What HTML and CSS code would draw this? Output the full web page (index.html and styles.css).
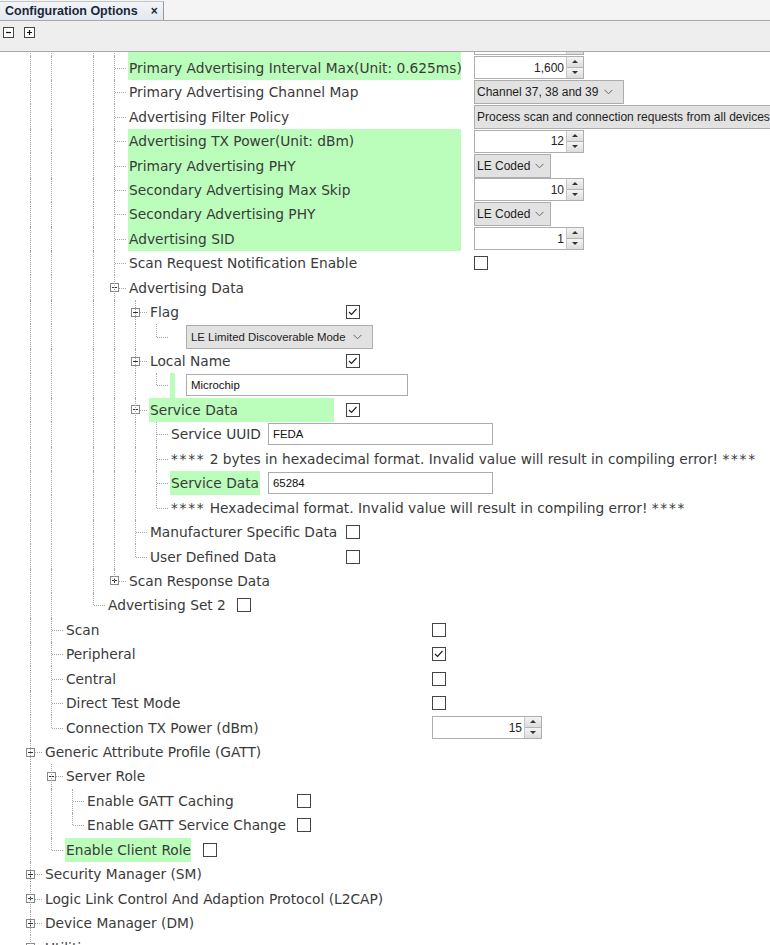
FILE: index.html
```html
<!DOCTYPE html>
<html>
<head>
<meta charset="utf-8">
<link rel="stylesheet" href="styles.css">
</head>
<body>
<div class="window">
  <div class="tabbar">
    <div class="tab"><span class="tab-title">Configuration Options</span><span class="tab-close">×</span></div>
  </div>
  <div class="toolbar">
    <span class="tbtn"><svg width="11" height="11" viewBox="0 0 11 11"><rect x="0.5" y="0.5" width="10" height="10" fill="#fff" stroke="#444"/><path d="M3 5.5h5" stroke="#111" stroke-width="1.2"/></svg></span>
    <span class="tbtn"><svg width="11" height="11" viewBox="0 0 11 11"><rect x="0.5" y="0.5" width="10" height="10" fill="#fff" stroke="#444"/><path d="M3 5.5h5M5.5 3v5" stroke="#111" stroke-width="1.2"/></svg></span>
  </div>
  <div class="viewport">
    <div class="tree">
      <div class="row">
        <span class="g v"></span><span class="g v"></span><span class="g"></span><span class="g v"></span><span class="g t"></span>
        <span class="lbl w5 hl"></span>
        <span class="spin"><span class="num"></span><span class="btns"><span class="up"></span><span class="dn"></span></span></span>
      </div>
      <div class="row">
        <span class="g v"></span><span class="g v"></span><span class="g"></span><span class="g v"></span><span class="g t"></span>
        <span class="lbl w5 hl">Primary Advertising Interval Max(Unit: 0.625ms)</span>
        <span class="spin"><span class="num">1,600</span><span class="btns"><span class="up"></span><span class="dn"></span></span></span>
      </div>
      <div class="row">
        <span class="g v"></span><span class="g v"></span><span class="g"></span><span class="g v"></span><span class="g t"></span>
        <span class="lbl w5">Primary Advertising Channel Map</span>
        <span class="combo">Channel 37, 38 and 39<svg class="chev" width="9" height="6" viewBox="0 0 9 6"><path d="M0.5 0.8l4 4 4-4" fill="none" stroke="#666"/></svg></span>
      </div>
      <div class="row">
        <span class="g v"></span><span class="g v"></span><span class="g"></span><span class="g v"></span><span class="g t"></span>
        <span class="lbl w5">Advertising Filter Policy</span>
        <span class="combo wide">Process scan and connection requests from all devices<svg class="chev" width="9" height="6" viewBox="0 0 9 6"><path d="M0.5 0.8l4 4 4-4" fill="none" stroke="#666"/></svg></span>
      </div>
      <div class="row">
        <span class="g v"></span><span class="g v"></span><span class="g"></span><span class="g v"></span><span class="g t"></span>
        <span class="lbl w5 hl">Advertising TX Power(Unit: dBm)</span>
        <span class="spin"><span class="num">12</span><span class="btns"><span class="up"></span><span class="dn"></span></span></span>
      </div>
      <div class="row">
        <span class="g v"></span><span class="g v"></span><span class="g"></span><span class="g v"></span><span class="g t"></span>
        <span class="lbl w5 hl">Primary Advertising PHY</span>
        <span class="combo c-phy">LE Coded<svg class="chev" width="9" height="6" viewBox="0 0 9 6"><path d="M0.5 0.8l4 4 4-4" fill="none" stroke="#666"/></svg></span>
      </div>
      <div class="row">
        <span class="g v"></span><span class="g v"></span><span class="g"></span><span class="g v"></span><span class="g t"></span>
        <span class="lbl w5 hl">Secondary Advertising Max Skip</span>
        <span class="spin"><span class="num">10</span><span class="btns"><span class="up"></span><span class="dn"></span></span></span>
      </div>
      <div class="row">
        <span class="g v"></span><span class="g v"></span><span class="g"></span><span class="g v"></span><span class="g t"></span>
        <span class="lbl w5 hl">Secondary Advertising PHY</span>
        <span class="combo c-phy">LE Coded<svg class="chev" width="9" height="6" viewBox="0 0 9 6"><path d="M0.5 0.8l4 4 4-4" fill="none" stroke="#666"/></svg></span>
      </div>
      <div class="row">
        <span class="g v"></span><span class="g v"></span><span class="g"></span><span class="g v"></span><span class="g t"></span>
        <span class="lbl w5 hl">Advertising SID</span>
        <span class="spin"><span class="num">1</span><span class="btns"><span class="up"></span><span class="dn"></span></span></span>
      </div>
      <div class="row">
        <span class="g v"></span><span class="g v"></span><span class="g"></span><span class="g v"></span><span class="g t"></span>
        <span class="lbl w5">Scan Request Notification Enable</span>
        <span class="cb"></span>
      </div>
      <div class="row">
        <span class="g v"></span><span class="g v"></span><span class="g"></span><span class="g v"></span><span class="g t x minus"></span>
        <span class="lbl">Advertising Data</span>
      </div>
      <div class="row">
        <span class="g v"></span><span class="g v"></span><span class="g"></span><span class="g v"></span><span class="g v"></span><span class="g t x minus"></span>
        <span class="lbl w6">Flag</span>
        <span class="cb on"></span>
      </div>
      <div class="row">
        <span class="g v"></span><span class="g v"></span><span class="g"></span><span class="g v"></span><span class="g v"></span><span class="g v"></span><span class="g l"></span>
        <span class="lbl w0"></span>
        <span class="combo c-mode">LE Limited Discoverable Mode<svg class="chev" width="9" height="6" viewBox="0 0 9 6"><path d="M0.5 0.8l4 4 4-4" fill="none" stroke="#666"/></svg></span>
      </div>
      <div class="row">
        <span class="g v"></span><span class="g v"></span><span class="g"></span><span class="g v"></span><span class="g v"></span><span class="g t x minus"></span>
        <span class="lbl w6">Local Name</span>
        <span class="cb on"></span>
      </div>
      <div class="row">
        <span class="g v"></span><span class="g v"></span><span class="g"></span><span class="g v"></span><span class="g v"></span><span class="g v"></span><span class="g l"></span>
        <span class="lbl w0 hl"></span>
        <span class="field f-name">Microchip</span>
      </div>
      <div class="row">
        <span class="g v"></span><span class="g v"></span><span class="g"></span><span class="g v"></span><span class="g v"></span><span class="g t x minus"></span>
        <span class="lbl w6 hl">Service Data</span>
        <span class="cb on"></span>
      </div>
      <div class="row">
        <span class="g v"></span><span class="g v"></span><span class="g"></span><span class="g v"></span><span class="g v"></span><span class="g v"></span><span class="g t"></span>
        <span class="lbl w7">Service UUID</span>
        <span class="field f-svc">FEDA</span>
      </div>
      <div class="row">
        <span class="g v"></span><span class="g v"></span><span class="g"></span><span class="g v"></span><span class="g v"></span><span class="g v"></span><span class="g t"></span>
        <span class="lbl"><span class="ast">****</span>&nbsp;2 bytes in hexadecimal format. Invalid value will result in compiling error!&nbsp;<span class="ast">****</span></span>
      </div>
      <div class="row">
        <span class="g v"></span><span class="g v"></span><span class="g"></span><span class="g v"></span><span class="g v"></span><span class="g v"></span><span class="g t"></span>
        <span class="lbl w7 hl">Service Data</span>
        <span class="field f-svc">65284</span>
      </div>
      <div class="row">
        <span class="g v"></span><span class="g v"></span><span class="g"></span><span class="g v"></span><span class="g v"></span><span class="g v"></span><span class="g l"></span>
        <span class="lbl"><span class="ast">****</span>&nbsp;Hexadecimal format. Invalid value will result in compiling error!&nbsp;<span class="ast">****</span></span>
      </div>
      <div class="row">
        <span class="g v"></span><span class="g v"></span><span class="g"></span><span class="g v"></span><span class="g v"></span><span class="g t"></span>
        <span class="lbl w6">Manufacturer Specific Data</span>
        <span class="cb"></span>
      </div>
      <div class="row">
        <span class="g v"></span><span class="g v"></span><span class="g"></span><span class="g v"></span><span class="g v"></span><span class="g l"></span>
        <span class="lbl w6">User Defined Data</span>
        <span class="cb"></span>
      </div>
      <div class="row">
        <span class="g v"></span><span class="g v"></span><span class="g"></span><span class="g v"></span><span class="g l x plus"></span>
        <span class="lbl">Scan Response Data</span>
      </div>
      <div class="row">
        <span class="g v"></span><span class="g v"></span><span class="g"></span><span class="g l"></span>
        <span class="lbl w4">Advertising Set 2</span>
        <span class="cb"></span>
      </div>
      <div class="row">
        <span class="g v"></span><span class="g t"></span>
        <span class="lbl w2">Scan</span>
        <span class="cb"></span>
      </div>
      <div class="row">
        <span class="g v"></span><span class="g t"></span>
        <span class="lbl w2">Peripheral</span>
        <span class="cb on"></span>
      </div>
      <div class="row">
        <span class="g v"></span><span class="g t"></span>
        <span class="lbl w2">Central</span>
        <span class="cb"></span>
      </div>
      <div class="row">
        <span class="g v"></span><span class="g t"></span>
        <span class="lbl w2">Direct Test Mode</span>
        <span class="cb"></span>
      </div>
      <div class="row">
        <span class="g v"></span><span class="g l"></span>
        <span class="lbl w2">Connection TX Power (dBm)</span>
        <span class="spin"><span class="num">15</span><span class="btns"><span class="up"></span><span class="dn"></span></span></span>
      </div>
      <div class="row">
        <span class="g t x minus"></span>
        <span class="lbl">Generic Attribute Profile (GATT)</span>
      </div>
      <div class="row">
        <span class="g v"></span><span class="g t x minus"></span>
        <span class="lbl">Server Role</span>
      </div>
      <div class="row">
        <span class="g v"></span><span class="g v"></span><span class="g t"></span>
        <span class="lbl w3">Enable GATT Caching</span>
        <span class="cb"></span>
      </div>
      <div class="row">
        <span class="g v"></span><span class="g v"></span><span class="g l"></span>
        <span class="lbl w3">Enable GATT Service Change</span>
        <span class="cb"></span>
      </div>
      <div class="row">
        <span class="g v"></span><span class="g l"></span>
        <span class="lbl wc hl">Enable Client Role</span>
        <span class="cb"></span>
      </div>
      <div class="row">
        <span class="g t x plus"></span>
        <span class="lbl">Security Manager (SM)</span>
      </div>
      <div class="row">
        <span class="g t x plus"></span>
        <span class="lbl">Logic Link Control And Adaption Protocol (L2CAP)</span>
      </div>
      <div class="row">
        <span class="g t x plus"></span>
        <span class="lbl">Device Manager (DM)</span>
      </div>
      <div class="row">
        <span class="g t x plus"></span>
        <span class="lbl">Utilities</span>
      </div>
    </div>
  </div>
</div>
</body>
</html>
```

FILE: styles.css
```css
html, body {
  margin: 0;
  padding: 0;
  background: #ffffff;
}

.window {
  width: 770px;
  height: 945px;
  overflow: hidden;
  display: flex;
  flex-direction: column;
  font-family: "DejaVu Sans", Verdana, sans-serif;
}

.tabbar {
  height: 21px;
  flex: none;
  display: flex;
  align-items: flex-end;
  background: #f4f4f4;
  border-bottom: 1px solid #a8a8a8;
  box-sizing: border-box;
}

.tab {
  height: 19px;
  width: 164px;
  box-sizing: border-box;
  display: flex;
  align-items: center;
  padding-left: 5px;
  background: linear-gradient(#f2f5f9, #e2e8f0);
  border-right: 1px solid #9a9a9a;
  border-top: 1px solid #c4c4c4;
  font-family: "Liberation Sans", Tahoma, sans-serif;
  font-size: 12.5px;
  font-weight: bold;
  color: #1b2738;
}

.tab-close {
  margin-left: 13px;
  font-size: 12px;
}

.toolbar {
  height: 31px;
  flex: none;
  display: flex;
  align-items: flex-start;
  gap: 10px;
  padding: 6px 0 0 3px;
  box-sizing: border-box;
  background: #eeeeee;
  border-bottom: 1px solid #a8a8a8;
}

.tbtn {
  width: 11px;
  height: 11px;
  display: block;
}

.tbtn svg {
  display: block;
}

.viewport {
  flex: 1;
  overflow: hidden;
  background: #ffffff;
}

.tree {
  margin-top: -20.9px;
}

.row {
  height: 24.45px;
  display: flex;
  align-items: center;
  padding-left: 20px;
  font-size: 13.75px;
  color: #3a3a3a;
  white-space: nowrap;
}

/* tree guides */
.g {
  flex: none;
  width: 21px;
  height: 100%;
  position: relative;
}

.g.v::before,
.g.t::before,
.g.l::before {
  content: "";
  position: absolute;
  left: 10px;
  top: 0;
  bottom: 0;
  border-left: 1px dotted #a4a4a4;
}

.g.l::before {
  bottom: 50%;
}

.g.t::after,
.g.l::after {
  content: "";
  position: absolute;
  left: 11px;
  right: -1px;
  top: 50%;
  border-top: 1px dotted #a4a4a4;
}

.g.x.minus::after,
.g.x.plus::after {
  left: 15px;
}

.g.x {
  background-repeat: no-repeat;
  background-position: 6px 50%;
}

.g.x.minus {
  background-image: url("data:image/svg+xml,%3Csvg xmlns='http://www.w3.org/2000/svg' width='9' height='9'%3E%3Crect x='0.5' y='0.5' width='8' height='8' fill='white' stroke='%23888'/%3E%3Cpath d='M2 4.5h5' stroke='%23333'/%3E%3C/svg%3E");
}

.g.x.plus {
  background-image: url("data:image/svg+xml,%3Csvg xmlns='http://www.w3.org/2000/svg' width='9' height='9'%3E%3Crect x='0.5' y='0.5' width='8' height='8' fill='white' stroke='%23888'/%3E%3Cpath d='M2 4.5h5M4.5 2v5' stroke='%23333'/%3E%3C/svg%3E");
}

/* labels */
.lbl {
  flex: none;
  box-sizing: border-box;
  height: 100%;
  display: flex;
  align-items: center;
  padding-left: 1px;
  margin-left: 3px;
  margin-right: 11px;
}

.lbl.hl {
  background: #bbfdbb;
}

.ast {
  letter-spacing: 1.7px;
}

.w5 { width: 333px; margin-right: 13px; }
.w6 { width: 185px; margin-right: 12px; }
.w7 { width: 90px; margin-right: 8px; }
.w0 { width: 5px; }
.w4 { width: 119px; }
.w2 { width: 356px; }
.w3 { width: 200px; }
.wc { width: 126px; margin-right: 12px; }

/* controls */
.spin {
  flex: none;
  width: 110px;
  height: 23px;
  box-sizing: border-box;
  border: 1px solid #aeaeae;
  background: #fff;
  display: flex;
  font-family: "Liberation Sans", Tahoma, sans-serif;
  font-size: 12px;
}

.spin .num {
  flex: 1;
  display: flex;
  align-items: center;
  justify-content: flex-end;
  padding-right: 2px;
  color: #222;
}

.spin .btns {
  width: 16px;
  display: flex;
  flex-direction: column;
  border-left: 1px solid #c6c6c6;
}

.spin .up,
.spin .dn {
  flex: 1;
  background: linear-gradient(#f4f4f4, #dcdcdc);
  position: relative;
}

.spin .up {
  border-bottom: 1px solid #b4b4b4;
}

.spin .up::after,
.spin .dn::after {
  content: "";
  position: absolute;
  left: 5px;
  top: 3px;
  border-left: 3px solid transparent;
  border-right: 3px solid transparent;
}

.spin .up::after {
  border-bottom: 3px solid #333;
}

.spin .dn::after {
  border-top: 3px solid #333;
}

.combo {
  flex: none;
  height: 24px;
  box-sizing: border-box;
  border: 1px solid #adadad;
  background: #e2e2e2;
  display: flex;
  align-items: center;
  padding: 0 10px 0 2px;
  font-family: "Liberation Sans", Tahoma, sans-serif;
  font-size: 12px;
  color: #1e1e1e;
}

.combo .chev {
  flex: none;
  margin-left: 6px;
}

.combo.wide {
  padding-right: 30px;
}

.combo.c-phy {
  width: 77px;
  padding-right: 6px;
  justify-content: space-between;
}

.combo.c-phy .chev {
  margin-left: 4px;
}

.combo.c-mode {
  width: 187px;
  justify-content: space-between;
  padding-left: 4px;
  font-size: 11.4px;
}

.cb {
  flex: none;
  width: 14px;
  height: 14px;
  box-sizing: border-box;
  border: 1px solid #444;
  background: #fff;
}

.cb.on {
  background: #fff url("data:image/svg+xml,%3Csvg xmlns='http://www.w3.org/2000/svg' width='12' height='12'%3E%3Cpath d='M2 6l2.5 2.5 5-5.5' fill='none' stroke='%23222' stroke-width='1.2'/%3E%3C/svg%3E") no-repeat center;
}

.field {
  flex: none;
  height: 22px;
  box-sizing: border-box;
  border: 1px solid #acacac;
  background: #fff;
  display: flex;
  align-items: center;
  padding-left: 4px;
  font-family: "Liberation Sans", Tahoma, sans-serif;
  font-size: 11.4px;
  color: #111;
}

.f-name { width: 222px; }
.f-svc { width: 225px; }
```
